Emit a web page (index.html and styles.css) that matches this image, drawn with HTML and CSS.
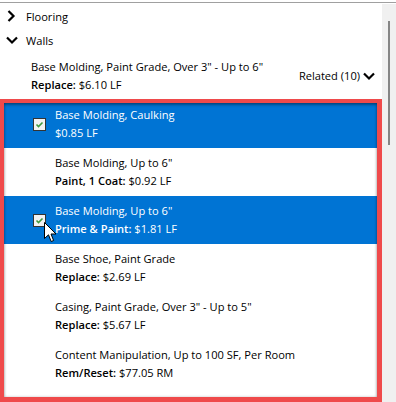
FILE: index.html
```html
<!DOCTYPE html>
<html lang="en">
<head>
    <meta charset="UTF-8">
    <title>Related items</title>
    <link rel="stylesheet" href="styles.css">
</head>
<body>
    <div class="pane">
        <div class="content">
            <div class="tree-row">
                <span class="chev">
                    <svg width="10" height="12" viewBox="0 0 10 12"><path d="M2.5 1 L7.5 6 L2.5 11" fill="none" stroke="#000" stroke-width="2.2"/></svg>
                </span>
                Flooring
            </div>
            <div class="tree-row">
                <span class="chev">
                    <svg width="12" height="10" viewBox="0 0 12 10"><path d="M1 2.5 L6 7.5 L11 2.5" fill="none" stroke="#000" stroke-width="2.2"/></svg>
                </span>
                Walls
            </div>
            <div class="parent-item">
                <div class="item-text">
                    <div>Base Molding, Paint Grade, Over 3" - Up to 6"</div>
                    <div><b>Replace:</b> $6.10 LF</div>
                </div>
                <div class="related">
                    Related (10)
                    <svg width="12" height="10" viewBox="0 0 12 10"><path d="M1 2.5 L6 7.5 L11 2.5" fill="none" stroke="#000" stroke-width="2.2"/></svg>
                </div>
            </div>
            <div class="related-box">
                <div class="related-list">
                    <div class="rel-row selected">
                        <div class="check-cell"><span class="checkbox"><svg width="11" height="11" viewBox="0 0 11 11"><path d="M2.5 5.5 L4.5 7.5 L8.5 3.5" fill="none" stroke="#3f9a3f" stroke-width="1.6"/></svg></span></div>
                        <div class="rel-text">
                            <div>Base Molding, Caulking</div>
                            <div>$0.85 LF</div>
                        </div>
                    </div>
                    <div class="rel-row">
                        <div class="check-cell"></div>
                        <div class="rel-text">
                            <div>Base Molding, Up to 6"</div>
                            <div><b>Paint, 1 Coat:</b> $0.92 LF</div>
                        </div>
                    </div>
                    <div class="rel-row selected">
                        <div class="check-cell"><span class="checkbox"><svg width="11" height="11" viewBox="0 0 11 11"><path d="M2.5 5.5 L4.5 7.5 L8.5 3.5" fill="none" stroke="#3f9a3f" stroke-width="1.6"/></svg></span></div>
                        <div class="rel-text">
                            <div>Base Molding, Up to 6"</div>
                            <div><b>Prime &amp; Paint:</b> $1.81 LF</div>
                        </div>
                        <svg class="cursor" width="14" height="22" viewBox="0 0 14 22"><path d="M0.5 0.5 L0.5 16.5 L4.5 12.8 L7.2 19.5 L9.6 18.5 L7 12 L12 12 Z" fill="#fff" stroke="#000" stroke-width="1"/></svg>
                    </div>
                    <div class="rel-row">
                        <div class="check-cell"></div>
                        <div class="rel-text">
                            <div>Base Shoe, Paint Grade</div>
                            <div><b>Replace:</b> $2.69 LF</div>
                        </div>
                    </div>
                    <div class="rel-row">
                        <div class="check-cell"></div>
                        <div class="rel-text">
                            <div>Casing, Paint Grade, Over 3" - Up to 5"</div>
                            <div><b>Replace:</b> $5.67 LF</div>
                        </div>
                    </div>
                    <div class="rel-row">
                        <div class="check-cell"></div>
                        <div class="rel-text">
                            <div>Content Manipulation, Up to 100 SF, Per Room</div>
                            <div><b>Rem/Reset:</b> $77.05 RM</div>
                        </div>
                    </div>
                </div>
            </div>
        </div>
        <div class="scrollbar"><div class="thumb"></div></div>
    </div>
</body>
</html>
```

FILE: styles.css
```css
body {
    margin: 0;
    font-family: "Open Sans", "Noto Sans", Arial, sans-serif;
    font-size: 11.1px;
    color: #000;
    background: #fff;
    overflow: hidden;
}
b {
    font-weight: 600;
}
.pane {
    margin-top: 2px;
    border-top: 1px solid #a0a0a0;
    display: flex;
    height: 399px;
}
.content {
    width: 382px;
    padding-top: 1px;
}
.tree-row {
    height: 24px;
    display: flex;
    align-items: center;
    padding-left: 6px;
}
.chev {
    width: 20px;
    display: flex;
    align-items: center;
}
.parent-item {
    height: 47px;
    box-sizing: border-box;
    display: flex;
    align-items: center;
    justify-content: space-between;
    padding: 0 7px 0 31px;
    line-height: 18px;
}
.related {
    display: flex;
    align-items: center;
    gap: 3px;
    padding-top: 1px;
}
.related-box {
    position: relative;
    height: 303px;
    box-sizing: border-box;
    border: 5px solid #ef4a4b;
    border-top-width: 4px;
    border-left-width: 4px;
    overflow: hidden;
}
.related-box::after {
    content: "";
    position: absolute;
    inset: 0;
    box-shadow: inset 0 2px 3px rgba(0, 0, 0, 0.35), inset 0 0 3px rgba(0, 0, 0, 0.2);
    pointer-events: none;
}
.related-list {
    margin-top: -3px;
}
.rel-row {
    position: relative;
    height: 48px;
    display: flex;
    align-items: center;
    line-height: 17.5px;
}
.rel-row.selected {
    background: #0074d4;
    color: #fff;
}
.check-cell {
    width: 51px;
    display: flex;
}
.checkbox {
    margin-left: 29px;
    width: 11px;
    height: 11px;
    border: 1px solid #333;
    background: #f2f2f2;
    display: flex;
}
.rel-text {
    padding-bottom: 1px;
}
.cursor {
    position: absolute;
    left: 40px;
    top: 26px;
}
.scrollbar {
    width: 14px;
    margin-top: 1px;
    background: #f0f0f0;
}
.thumb {
    margin: 17px 0 0 6px;
    width: 2px;
    height: 124px;
    background: #858585;
}
```
